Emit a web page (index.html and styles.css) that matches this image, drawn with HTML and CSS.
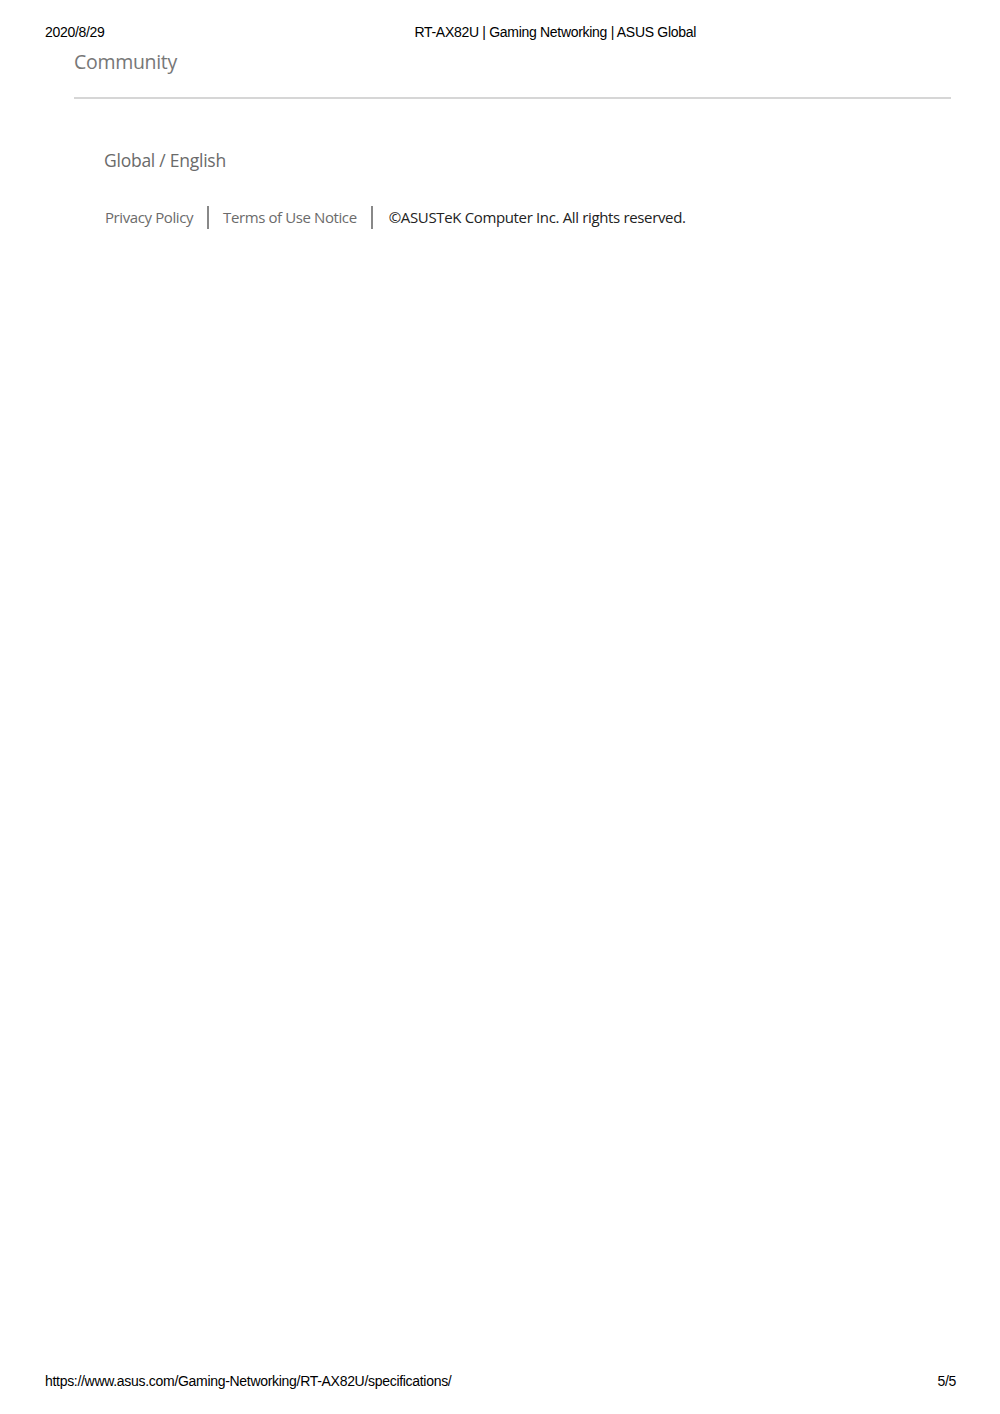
FILE: index.html
```html
<!DOCTYPE html>
<html lang="en">
<head>
<meta charset="utf-8">
<title>RT-AX82U | Gaming Networking | ASUS Global</title>
<link rel="stylesheet" href="styles.css">
</head>
<body>
<div class="page">
  <header class="print-head">
    <span class="date">2020/8/29</span>
    <span class="title">RT-AX82U | Gaming Networking | ASUS Global</span>
  </header>
  <main class="content">
    <div class="community">Community</div>
    <hr class="divider">
    <div class="footer-area">
      <div class="region">Global / English</div>
      <div class="legal">
        <a class="legal-link">Privacy Policy</a>
        <span class="sep"></span>
        <a class="legal-link">Terms of Use Notice</a>
        <span class="sep"></span>
        <span class="copy">©ASUSTeK Computer Inc. All rights reserved.</span>
      </div>
    </div>
  </main>
  <footer class="print-foot">
    <span class="url">https://www.asus.com/Gaming-Networking/RT-AX82U/specifications/</span>
    <span class="pages">5/5</span>
  </footer>
</div>
</body>
</html>
```

FILE: styles.css
```css
* { box-sizing: border-box; }
html, body { margin: 0; padding: 0; background: #fff; }
.page {
  width: 1000px;
  height: 1414px;
  display: flex;
  flex-direction: column;
}
.print-head {
  display: flex;
  padding: 24px 44px 0 45px;
  font-family: "Liberation Sans", Arial, sans-serif;
  font-size: 14px;
  line-height: 16px;
  color: #000;
  letter-spacing: -0.3px;
}
.print-head .title { margin-left: auto; margin-right: 260px; }
.content {
  padding: 0 49px 0 74px;
  font-family: "Open Sans", "Noto Sans", sans-serif;
}
.community {
  margin-top: 10px;
  font-size: 19.5px;
  line-height: 24px;
  color: #777;
  letter-spacing: -0.3px;
}
.divider {
  margin: 23px 0 0 0;
  border: 0;
  height: 2px;
  background: #d6d6d6;
}
.footer-area { padding-left: 30px; }
.region {
  margin-top: 49px;
  font-size: 17.5px;
  line-height: 24px;
  color: #6a6a6a;
  letter-spacing: -0.25px;
}
.legal {
  margin-top: 33px;
  display: flex;
  align-items: center;
  font-size: 15px;
  line-height: 24px;
  letter-spacing: -0.3px;
}
.legal-link { color: #6b6b6b; padding-left: 1px; letter-spacing: -0.4px; }
.sep {
  width: 2px;
  height: 23px;
  background: #888;
  margin: 0 13px 0 14px;
}
.copy { color: #222; letter-spacing: -0.35px; margin-left: 3px; }
.print-foot {
  margin-top: auto;
  display: flex;
  justify-content: space-between;
  padding: 0 44px 25px 45px;
  font-family: "Liberation Sans", Arial, sans-serif;
  font-size: 14px;
  line-height: 16px;
  color: #000;
  letter-spacing: -0.3px;
}
```
